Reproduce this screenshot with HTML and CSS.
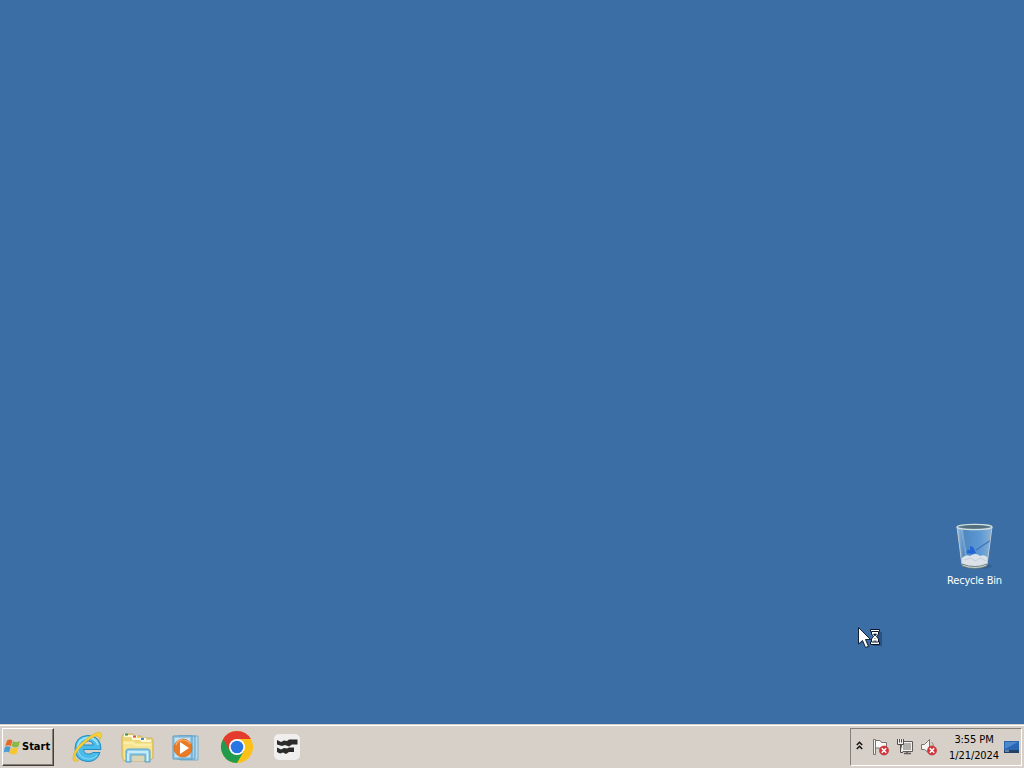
FILE: index.html
```
<!DOCTYPE html>
<html lang="en">
<head>
    <meta charset="UTF-8">
    <meta name="viewport" content="width=device-width, initial-scale=1.0">
    <title>Desktop</title>
    <link rel="stylesheet" href="styles.css">
</head>
<body>
    <div id="desktop">
        <div class="shortcut">
            <svg width="42" height="50" viewBox="0 0 42 50">
                <defs>
                    <linearGradient id="glass" x1="0" x2="1" y1="0" y2="0">
                        <stop offset="0" stop-color="#9fc0dc"/>
                        <stop offset=".2" stop-color="#4f88c2"/>
                        <stop offset=".65" stop-color="#5b98d4"/>
                        <stop offset="1" stop-color="#8db2d3"/>
                    </linearGradient>
                </defs>
                <ellipse cx="24" cy="45" rx="14" ry="3" fill="#2b5889" opacity=".6"/>
                <path d="M3 6L8 44Q21 50 33 44L38 6Z" fill="url(#glass)"/>
                <path d="M8 37Q12 33 16 35Q22 31 26 35Q31 33 34 37L33 43Q21 48 8 43Z" fill="#dce2e9"/>
                <path d="M10 39L17 37L21 40L27 37L32 40" fill="none" stroke="#c3ccd8"/>
                <path d="M12 32L14 28L16 30V25L19 26L22 32L18 33Z" fill="#2166d2"/>
                <path d="M22 29L37 19" fill="none" stroke="#3f75b4" stroke-width="1.3"/>
                <path d="M8 9L12 35" stroke="#b9d2e6" opacity=".35" stroke-width="2"/>
                <path d="M3 6L8 44M38 6L33 44" stroke="#bac9d3"/>
                <path d="M8 43Q21 48 33 43V45Q21 50 8 45Z" fill="#cbd3ce" stroke="#566c68" stroke-width=".7"/>
                <ellipse cx="20.5" cy="6" rx="17.5" ry="2.6" fill="#6c8ea7" stroke="#d6dfdd" stroke-width="1.3"/>
                <path d="M4 6Q20 2 37 6Q20 9 4 6" fill="#526f7c"/>
            </svg>
            <span>Recycle Bin</span>
        </div>
        <svg class="cursor" width="26" height="24" viewBox="0 0 26 24">
            <path d="M2 2V18L6 14L9 21L12 20L9 13H14Z" fill="#234c7b" opacity=".5"/>
            <path d="M.5 .5V17L4.5 13.5L7.5 20.5L10.5 19.3L7.5 12.5H12.5Z" fill="#fff" stroke="#142034"/>
            <path d="M15 5H24V19H15Z" fill="#173c66" opacity=".55"/>
            <path d="M12.5 2.5H21.5V4.5H20.5V7L18.5 9.5L20.5 12V15H21.5V17.5H12.5V15H13.5V12L15.5 9.5L13.5 7V4.5H12.5Z" fill="#fff" stroke="#0a1428"/>
            <path d="M14 4.5H20M14 15H20" stroke="#0a1428"/>
            <path d="M15.5 7H18.5L17 9ZM17 11V12M15.5 14H18.5" fill="#0a1428" stroke="#0a1428" stroke-width=".7"/>
        </svg>
    </div>

    <div id="taskbar">
        <button class="start">
            <svg width="17" height="17" viewBox="0 0 17 17">
                <path d="M3 1.5Q6 -.3 8.4 1.5L6.9 7Q4 5.5 1.2 7.3Z" fill="#e6672c"/>
                <path d="M9 2Q12 3.8 16 2L14.4 7.8Q10.5 9.3 7.5 7.3Z" fill="#8bb947"/>
                <path d="M.9 8Q4 6.4 6.6 8L5.1 13.6Q2.5 12 -.4 13.6Z" fill="#4a9bd5"/>
                <path d="M7.1 8.4Q10.5 10.1 14.1 8.5L12.6 14.4Q9 16.2 5.5 14.2Z" fill="#f7c62f"/>
            </svg>
            <span>Start</span>
        </button>

        <div class="pinned">
            <!-- Internet Explorer -->
            <svg width="34" height="34" viewBox="0 0 34 34">
                <path d="M31 19.5H13.5Q14 24 18.5 24Q21.5 24 23 22.5H30Q27 31.5 18 31.5Q5 31 5 18.5Q5.5 6 18 5.5Q31 6 31 19.5ZM13.5 15H23.5Q22.5 11 18.5 11Q14.5 11 13.5 15Z" fill="#4abcea" fill-rule="evenodd" stroke="#218bc4"/>
                <path d="M7.5 17Q9 8.5 18 7.5Q26 8 28 15" fill="none" stroke="#9ce3fa" stroke-width="1.8"/>
                <path d="M8 20Q9 28 18 29Q24 29 27 25" fill="none" stroke="#83d6f4" stroke-width="1.2"/>
                <path d="M9 30Q2 34 3 27Q4 18 15 10Q27 0 31 3Q33 5 29 11Q30 6 27 6Q23 6 14 14Q4 23 5 28Q6 31 9 30Z" fill="#f7cf36" stroke="#d9aa20" stroke-width=".5"/>
            </svg>
            <!-- Explorer -->
            <svg width="34" height="34" viewBox="0 0 34 34">
                <path d="M2 7L3 4H13L15 6H21L23 8H32L33 10V28L29 31H4L2 27Z" fill="#ecd67a" stroke="#c5a849" stroke-width=".7"/>
                <path d="M4 6H12L13 9H20L22 11H31" fill="none" stroke="#fff8d2" stroke-width="2"/>
                <path d="M4 4.5H8M12 6.5H17M20 9H26" stroke="#fff" stroke-width="2"/>
                <path d="M5 4.5H8" stroke="#348d4d" stroke-width="2"/>
                <path d="M13 6.5H16" stroke="#d85134" stroke-width="2"/>
                <path d="M21 9H24" stroke="#438bc1" stroke-width="2"/>
                <path d="M3 11H14L16 13H32V28L29 30H4Z" fill="#f6e491"/>
                <path d="M4 13H13L15 15H31" fill="none" stroke="#fff6bd"/>
                <path d="M6 32V21Q6 19 9 19H27Q30 19 30 21V32H25V25H11V32Z" fill="#91d0ed" stroke="#549fce"/>
                <path d="M12 26H24V31H12Z" fill="#d9d5bb"/>
                <path d="M8 22H28M8 23V31M27.5 23V31" fill="none" stroke="#dcf4fc" stroke-width="1.5"/>
            </svg>
            <!-- Media Player -->
            <svg width="34" height="34" viewBox="0 0 34 34">
                <path d="M10 6H28V30H10Z" fill="#badced" stroke="#78aecd"/>
                <path d="M7 6H25V29H7Z" fill="#a7d2ea" stroke="#5ba0c8"/>
                <path d="M3 6H22V29H3Z" fill="#99cae5" stroke="#5b9dc5"/>
                <path d="M5 8H20V27H5Z" fill="#c6e3ef"/>
                <circle cx="13" cy="18" r="9" fill="#ea7a24" stroke="#cf6822" stroke-width=".8"/>
                <path d="M6 15Q8 9.5 13 10Q18 10 20 14" fill="none" stroke="#f8b273" stroke-width="1.2"/>
                <path d="M10 12V24L19 18Z" fill="#fff"/>
            </svg>
            <!-- Chrome -->
            <svg width="34" height="34" viewBox="0 0 34 34">
                <circle cx="17" cy="17" r="16" fill="#fbc116"/>
                <path d="M3.14 9A16 16 0 0 0 17 33L24 21L17 17Z" fill="#229b4c"/>
                <path d="M3.14 9A16 16 0 0 1 30.86 9H17L10 21Z" fill="#e33b2e"/>
                <circle cx="17" cy="17" r="8" fill="#fff"/>
                <circle cx="17" cy="17" r="6.3" fill="#2875e3"/>
            </svg>
            <!-- Striped app tile -->
            <svg width="34" height="34" viewBox="0 0 34 34">
                <rect x="4" y="4" width="26" height="26" rx="5" fill="#f0efee"/>
                <path d="M7 10L11 12L14 10.5L17 11L19 9.5H27.5V14.5H22L19 16.5L15 15L12 16L7 14.5ZM7 17.5L11 19.5L14 18L17 18.5L19 17.5H24V22H19L16 24L13 22.5L10 23.5L7 22Z" fill="#2b2b2b"/>
            </svg>
        </div>

        <div class="tray">
            <svg class="chevrons" width="7" height="10" viewBox="0 0 7 10">
                <path d="M.8 4L3.5 1.3L6.2 4M.8 8L3.5 5.3L6.2 8" fill="none" stroke="#111" stroke-width="1.5"/>
            </svg>
            <svg width="18" height="18" viewBox="0 0 18 18">
                <path d="M1.5 1.5H3.5V16.5H1.5Z" fill="#f5f4f2" stroke="#77736f"/>
                <path d="M3.5 2.5H8L9.5 4.5H14.5V11.5H9L7.5 10H3.5Z" fill="#faf9f8" stroke="#77736f"/>
                <circle cx="12" cy="12.5" r="4.6" fill="#d6343b" stroke="#b7252d" stroke-width=".5"/>
                <path d="M9.8 10.3L14.2 14.7M14.2 10.3L9.8 14.7" stroke="#fff" stroke-width="1.6"/>
            </svg>
            <svg width="18" height="18" viewBox="0 0 18 18">
                <path d="M5.5 3.5H16.5V13.5H5.5Z" fill="#f3f1ee" stroke="#5d5a57"/>
                <path d="M7 5H15V12H7Z" fill="#b3b0ac"/>
                <path d="M8 15.5H15M11 14V16" stroke="#5d5a57" stroke-width="1.5"/>
                <path d="M1.5 1V6.5H7.5V1M4.5 6.5V14.5H7M3.5 1V4.5M5.5 1V4.5" fill="#eee" stroke="#504d4a"/>
            </svg>
            <svg width="18" height="18" viewBox="0 0 18 18">
                <path d="M1.5 6.5H4.5L9.5 1.5V15.5L4.5 11.5H1.5Z" fill="#f5f4f2" stroke="#77746f"/>
                <path d="M11.5 4Q14 6 13 8" fill="none" stroke="#8e8b87"/>
                <circle cx="12" cy="12.5" r="4.6" fill="#d6343b" stroke="#b7252d" stroke-width=".5"/>
                <path d="M9.8 10.3L14.2 14.7M14.2 10.3L9.8 14.7" stroke="#fff" stroke-width="1.6"/>
            </svg>
            <div class="clock">
                <div class="time">3:55 PM</div>
                <div>1/21/2024</div>
            </div>
            <svg class="show" width="15" height="14" viewBox="0 0 15 14">
                <path d="M0 1H15V12H0Z" fill="#2866b4"/>
                <path d="M1 2H14L1 9Z" fill="#4f88ca"/>
                <path d="M0 10H15V13H0Z" fill="#263f64"/>
                <path d="M1 11H5" stroke="#a8c8df"/>
            </svg>
        </div>
    </div>
</body>
</html>
```
FILE: styles.css
```
* {
    box-sizing: border-box;
    margin: 0;
}
body {
    display: flex;
    flex-direction: column;
    width: 1024px;
    height: 768px;
    overflow: hidden;
    background-color: #3b6ea5;
    font-family: "DejaVu Sans Condensed", "DejaVu Sans", sans-serif;
    font-size: 11px;
    font-stretch: condensed;
}
svg {
    display: block;
    flex: none;
}
#desktop {
    position: relative;
    flex: 1;
}
.shortcut {
    position: absolute;
    left: 937px;
    top: 521px;
    width: 75px;
    display: flex;
    flex-direction: column;
    align-items: center;
    color: white;
}
.shortcut span {
    line-height: 14px;
    margin-top: 3px;
    letter-spacing: -0.2px;
}
.cursor {
    position: absolute;
    left: 858px;
    top: 627px;
}
#taskbar {
    display: flex;
    height: 44px;
    padding: 2px 2px 2px;
    background-color: #d6d0c8;
    border-top: 1px solid #d6d0c8;
    box-shadow: inset 0 1px #fff;
}
.start {
    display: flex;
    align-items: center;
    width: 52px;
    height: 38px;
    margin-top: 1px;
    padding: 0 0 0 1px;
    border: 1px solid;
    border-color: #fff #404040 #404040 #fff;
    box-shadow: inset -1px -1px #85817a;
    background-color: #d6d0c8;
    color: black;
    font-family: inherit;
    font-size: 11px;
    font-weight: bold;
    font-stretch: condensed;
}
.start span {
    margin-left: 1px;
    padding-bottom: 1px;
}
.pinned {
    display: flex;
    align-items: center;
    gap: 16px;
    margin-top: 1px;
    margin-left: 16px;
}
.tray {
    display: flex;
    align-items: center;
    width: 172px;
    height: 38px;
    margin-top: 1px;
    margin-left: auto;
    padding-left: 5px;
    border: 1px solid;
    border-color: #85817a #fff #fff #85817a;
}
.tray svg {
    margin-right: 6px;
}
.tray .chevrons {
    margin-right: 9px;
    margin-bottom: 3px;
}
.clock {
    width: 54px;
    margin-top: 1px;
    margin-left: 3px;
    line-height: 16px;
    text-align: center;
    white-space: nowrap;
    letter-spacing: -0.1px;
}
.tray .show {
    margin: 0 0 0 3px;
}
```
